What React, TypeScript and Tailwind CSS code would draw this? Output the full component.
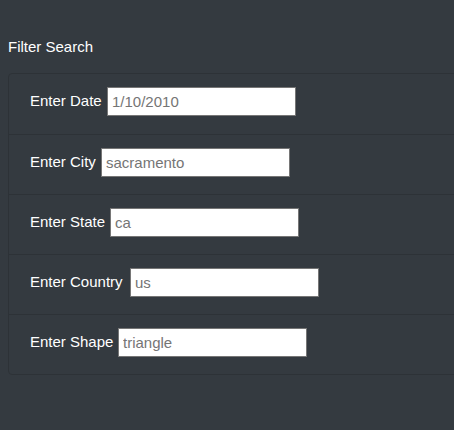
import React from 'react';

const fields = [
  { label: 'Enter Date', placeholder: '1/10/2010', w: 'w-[73px]' },
  { label: 'Enter City', placeholder: 'sacramento', w: 'w-[67px]' },
  { label: 'Enter State', placeholder: 'ca', w: 'w-[76px]' },
  { label: 'Enter Country', placeholder: 'us', w: 'w-[96px]' },
  { label: 'Enter Shape', placeholder: 'triangle', w: 'w-[84px]' },
];

export default function App() {
  return (
    <div className="h-[430px] w-[454px] overflow-hidden bg-[#343a40] pt-[36px] pl-2 font-['Liberation_Sans',sans-serif] text-white">
      <h5 className="mb-[15px] text-[15px] leading-[22px]">Filter Search</h5>
      <ul className="w-[480px] rounded-[4px] border border-[#2d3237]">
        {fields.map((f, i) => (
          <li
            key={f.label}
            className={`flex h-[60px] items-start px-[21px] pt-[13px] ${i > 0 ? 'border-t border-[#2d3237]' : ''}`}
          >
            <div className="flex items-center">
              <label className={`whitespace-nowrap text-[15px] ${f.w}`}>{f.label}</label>
              <input
                type="text"
                placeholder={f.placeholder}
                className="ml-[4px] h-[29px] w-[189px] border border-[#767676] bg-white px-[4px] text-[15px] text-black outline-none placeholder:text-[#757575]"
              />
            </div>
          </li>
        ))}
      </ul>
    </div>
  );
}
